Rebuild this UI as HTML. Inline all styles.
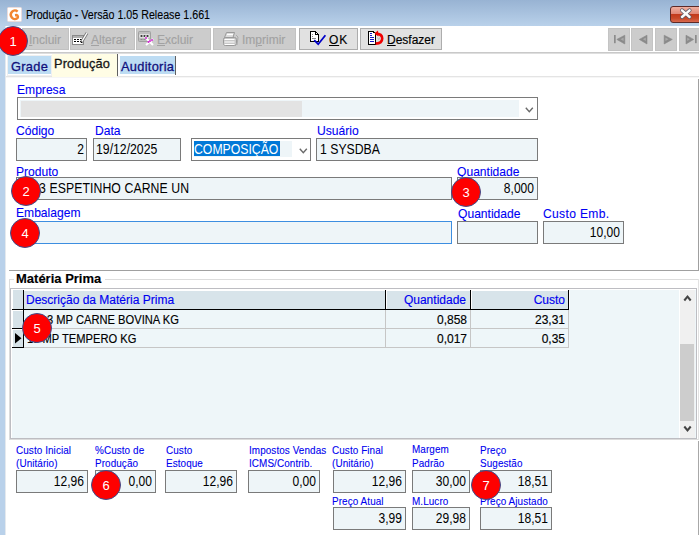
<!DOCTYPE html>
<html><head><meta charset="utf-8">
<style>
*{margin:0;padding:0;box-sizing:border-box}
html,body{width:699px;height:535px;overflow:hidden;background:#fff}
body{position:relative;font-family:"Liberation Sans",sans-serif;font-size:12px;color:#000}
.a{position:absolute}
svg.a{overflow:visible}
.t{position:absolute;white-space:nowrap;-webkit-text-stroke:0.15px currentColor}
.circ{position:absolute;border-radius:50%;background:#fe0000;border:1px solid #3d4d8c;color:#fff;font-size:13px;text-align:center;font-family:"Liberation Sans",sans-serif}
</style></head><body>

<div class="a" style="left:0px;top:0px;width:699px;height:26px;background:linear-gradient(#98b3d3,#b9d1ea);"></div>
<svg class="a" style="left:7px;top:7px" width="15" height="15" viewBox="0 0 15 15"><rect x="0.5" y="0.5" width="14" height="14" rx="1" fill="#fff" stroke="#eadcdc"/><path d="M10.6 4.6 A4 4.3 0 1 0 10.2 11.3 A1.9 1.9 0 0 0 9.6 8 L8 8.2" fill="none" stroke="#f28630" stroke-width="2.5"/></svg>
<div class="t" style="left:26px;top:8px;font-size:12px;line-height:14px;color:#000;transform:scaleX(0.89);transform-origin:0 0;-webkit-text-stroke:0.1px #000">Produção - Versão 1.05 Release 1.661</div>
<div class="a" style="left:670px;top:6px;width:44px;height:17px;border-radius:3px;border:1px solid #5c2a28;background:linear-gradient(#f0b0a0 0%,#e08878 45%,#c23a1c 50%,#c84828 75%,#d86a50 100%)"></div>
<svg class="a" style="left:679px;top:8px" width="14" height="12" viewBox="0 0 14 12"><path d="M3 2.3 L10.6 9 M10.6 2.3 L3 9" stroke="#5a5a68" stroke-width="3.9" stroke-linecap="round"/><path d="M3 2.3 L10.6 9 M10.6 2.3 L3 9" stroke="#fbfbfb" stroke-width="2.4" stroke-linecap="round"/></svg>
<div class="a" style="left:0px;top:26px;width:5px;height:509px;background:#b9d1ea;"></div>
<div class="a" style="left:5px;top:26px;width:1px;height:509px;background:#e4e9ee;"></div>
<div class="a" style="left:22px;top:28px;width:47px;height:22px;background:#cccccc;border:1px solid #c2c2c2"></div>
<div class="t" style="top:33px;font-size:12px;line-height:14px;color:#a2a2a2;font-weight:normal;left:29px;"><u>I</u>ncluir</div>
<div class="a" style="left:70px;top:28px;width:65px;height:22px;background:#cccccc;border:1px solid #c2c2c2"></div>
<div class="t" style="top:33px;font-size:12px;line-height:14px;color:#a2a2a2;font-weight:normal;left:91px;"><u>A</u>lterar</div>
<div class="a" style="left:136px;top:28px;width:75px;height:22px;background:#cccccc;border:1px solid #c2c2c2"></div>
<div class="t" style="top:33px;font-size:12px;line-height:14px;color:#a2a2a2;font-weight:normal;left:157px;"><u>E</u>xcluir</div>
<div class="a" style="left:213px;top:28px;width:83px;height:22px;background:#cccccc;border:1px solid #c2c2c2"></div>
<div class="t" style="top:33px;font-size:12px;line-height:14px;color:#a2a2a2;font-weight:normal;left:242px;">Im<u>p</u>rimir</div>
<div class="a" style="left:299px;top:28px;width:59px;height:22px;background:#e1e1e1;border:1px solid #adadad"></div>
<div class="t" style="top:33px;font-size:12px;line-height:14px;color:#000;font-weight:normal;left:329px;letter-spacing:0.8px"><u>O</u>K</div>
<div class="a" style="left:360px;top:28px;width:82px;height:22px;background:#e1e1e1;border:1px solid #adadad"></div>
<div class="t" style="top:33px;font-size:12px;line-height:14px;color:#000;font-weight:normal;left:387px;"><u>D</u>esfazer</div>
<svg class="a" style="left:72px;top:30px" width="17" height="16" viewBox="0 0 17 16"><rect x="0.5" y="5.5" width="11" height="9" fill="#fff" stroke="#8a8a8a"/><rect x="1" y="6" width="10" height="2" fill="#b0b0b0"/><path d="M2 9.5h2M5 9.5h2M8 9.5h2M2 11.5h2M5 11.5h2M8 11.5h2" stroke="#000" stroke-width="1.2"/><path d="M9.5 12 L15 3" stroke="#777" stroke-width="3"/><path d="M9.5 12 L15 3" stroke="#fff" stroke-width="1.4"/><path d="M8.6 12.8 L10.8 13.2 L9.2 11" fill="#000"/></svg>
<svg class="a" style="left:138px;top:31px" width="18" height="16" viewBox="0 0 18 16"><rect x="0.5" y="0.5" width="12" height="10" rx="1" fill="#bdbdbd" stroke="#a0a0a0"/><rect x="1.5" y="3.5" width="10" height="3" fill="#fff"/><path d="M2.5 5h2M5.5 5h2M8.5 5h2" stroke="#000" stroke-width="1.4"/><path d="M2.5 8.5h2M5.5 8.5h2M8.5 8.5h2" stroke="#8a8a8a" stroke-width="1"/><path d="M7 6 L15 14 M15 8 L8 14" stroke="#fff" stroke-width="2"/><circle cx="8" cy="7" r="1" fill="#d020d0"/><circle cx="12" cy="10" r="1" fill="#d020d0"/><circle cx="14" cy="9" r="1" fill="#d020d0"/><circle cx="10.5" cy="11" r="1" fill="#d020d0"/></svg>
<svg class="a" style="left:223px;top:32px" width="17" height="15" viewBox="0 0 17 15"><path d="M3.5 0.5 H11.5 L10 5.5 H1.5 Z" fill="#dcdcdc" stroke="#9a9a9a"/><path d="M4 2.5h6" stroke="#fff" stroke-width="1"/><rect x="0.5" y="5.5" width="13" height="8" rx="2" fill="#c8c8c8" stroke="#9a9a9a"/><path d="M1.5 7.5h10M1.5 10h10M1.5 12.5h10" stroke="#fff" stroke-width="1.2"/><path d="M13 3 L15 5 L14 13" fill="none" stroke="#aaa" stroke-width="1"/></svg>
<svg class="a" style="left:309px;top:30px" width="18" height="17" viewBox="0 0 18 17"><g shape-rendering="crispEdges"><path d="M1.5 1.5 H6.5 L9.5 4.5 V11.5 H1.5 Z" fill="#fff" stroke="#000" stroke-width="1.4"/><rect x="6" y="1" width="1" height="4" fill="#000"/><rect x="6" y="4" width="3" height="1" fill="#000"/><rect x="3" y="4" width="1" height="1" fill="#888"/><rect x="3" y="6" width="1" height="1" fill="#888"/><rect x="3" y="8" width="4" height="1" fill="#888"/></g><path d="M5.2 10.2 L9.2 14.2 L16.4 5.2" fill="none" stroke="#0000c8" stroke-width="1.8"/></svg>
<svg class="a" style="left:367px;top:30px" width="18" height="16" viewBox="0 0 18 16"><g shape-rendering="crispEdges"><path d="M1 1 H6 L8 3 V14 H1 Z" fill="#fff" stroke="#000" stroke-width="1"/><rect x="6" y="1" width="1" height="2" fill="#000"/><rect x="3" y="3" width="2" height="1" fill="#1818c8"/><rect x="3" y="5" width="2" height="1" fill="#1818c8"/><rect x="3" y="7" width="4" height="1" fill="#1818c8"/><rect x="3" y="9" width="4" height="1" fill="#1818c8"/><rect x="3" y="11" width="4" height="1" fill="#1818c8"/></g><path d="M8.5 3.6 C13.5 3.6 15.2 6 15.2 8.6 C15.2 11.6 12.8 13.6 8.6 13.6" fill="none" stroke="#f00000" stroke-width="2.6"/><path d="M7.6 3.2 L11 0.6 L11.4 6.4 Z" fill="#f00000"/><path d="M10.5 7.5 L11.8 9.6 L13 7.3" fill="none" stroke="#b8b8b8" stroke-width="1"/></svg>
<div class="a" style="left:608px;top:28px;width:22px;height:23px;background:#cccccc;border:1px solid #c4c4c4"></div>
<div class="a" style="left:631px;top:28px;width:22px;height:23px;background:#cccccc;border:1px solid #c4c4c4"></div>
<div class="a" style="left:655px;top:28px;width:22px;height:23px;background:#cccccc;border:1px solid #c4c4c4"></div>
<div class="a" style="left:679px;top:28px;width:22px;height:23px;background:#cccccc;border:1px solid #c4c4c4"></div>
<svg class="a" style="left:614px;top:35px" width="11" height="10" viewBox="0 0 11 10"><rect x="0" y="0" width="1.7" height="8.2" fill="#8c8c8c"/><path d="M2.8 4.4 L10.8 0.2 L10.8 9 Z" fill="#8a8a8a" stroke="#8a8a8a" stroke-width="0.6" stroke-linejoin="round"/><path d="M6.5 4.2 L9.6 2.6 L9.6 6 Z" fill="#a9a9a9"/></svg>
<svg class="a" style="left:639px;top:35px" width="9" height="10" viewBox="0 0 9 10"><path d="M0.3 4.4 L8 0.2 L8 9 Z" fill="#8a8a8a" stroke="#8a8a8a" stroke-width="0.6" stroke-linejoin="round"/><path d="M4 4.2 L6.8 2.6 L6.8 6 Z" fill="#a9a9a9"/></svg>
<svg class="a" style="left:664px;top:35px" width="9" height="10" viewBox="0 0 9 10"><path d="M8.3 4.4 L0.2 0.2 L0.2 9 Z" fill="#8a8a8a" stroke="#8a8a8a" stroke-width="0.6" stroke-linejoin="round"/><path d="M4.5 4.2 L1.4 2.6 L1.4 6 Z" fill="#a9a9a9"/></svg>
<svg class="a" style="left:686px;top:35px" width="12" height="10" viewBox="0 0 12 10"><path d="M7.6 4.4 L0 0.2 L0 9 Z" fill="#8a8a8a" stroke="#8a8a8a" stroke-width="0.6" stroke-linejoin="round"/><path d="M3.8 4.2 L1.2 2.6 L1.2 6 Z" fill="#a9a9a9"/><rect x="9" y="0" width="1.7" height="8.2" fill="#8c8c8c"/></svg>
<div class="a" style="left:6px;top:52px;width:693px;height:1px;background:#c9c9c9;"></div>
<div class="a" style="left:6px;top:53px;width:693px;height:1px;background:#dedede;"></div>
<div class="a" style="left:6px;top:76px;width:693px;height:1px;background:#e4e4e4;"></div>
<div class="a" style="left:6px;top:77px;width:693px;height:1px;background:#f6f6f6;"></div>
<div class="a" style="left:7px;top:55px;width:45px;height:21px;background:#fff;border:1px solid #f0f0f0"></div>
<div class="a" style="left:8px;top:56px;width:43px;height:18px;background:#bddcf3;"></div>
<div class="t" style="top:59px;font-size:12.8px;line-height:15px;color:#10107c;font-weight:normal;left:11px;-webkit-text-stroke:0.3px currentColor;letter-spacing:0.3px">Grade</div>
<div class="a" style="left:52px;top:54px;width:65px;height:23px;background:#fffde5;"></div>
<div class="a" style="left:117px;top:54px;width:1px;height:22px;background:#606060;"></div>
<div class="t" style="top:56px;font-size:12.8px;line-height:15px;color:#161616;font-weight:normal;left:54px;-webkit-text-stroke:0.3px currentColor;letter-spacing:0.15px">Produção</div>
<div class="a" style="left:119px;top:56px;width:57px;height:19px;background:#fff;"></div>
<div class="a" style="left:120px;top:56px;width:55px;height:18px;background:#bddcf3;"></div>
<div class="a" style="left:175px;top:56px;width:1px;height:19px;background:#606060;"></div>
<div class="a" style="left:120px;top:56px;width:55px;height:19px;overflow:hidden">
<div class="t" style="top:3px;font-size:12.8px;line-height:15px;color:#10107c;font-weight:normal;left:1px;-webkit-text-stroke:0.3px currentColor;letter-spacing:0.3px">Auditoria</div>
</div>
<div class="a" style="left:9px;top:270px;width:690px;height:1px;background:#a0a0a0;"></div>
<div class="a" style="left:698px;top:79px;width:1px;height:192px;background:#a0a0a0;"></div>
<div class="t" style="top:82px;font-size:13px;line-height:15px;color:#0000f4;font-weight:normal;left:17px;transform:scaleX(0.93);transform-origin:0 0;-webkit-text-stroke:0.1px currentColor">Empresa</div>
<div class="a" style="left:17px;top:97px;width:521px;height:23px;background:#fff;border:1px solid #7a7a7a"></div>
<div class="a" style="left:20px;top:100px;width:499px;height:17px;background:#eef5f8;"></div>
<div class="a" style="left:21px;top:101px;width:281px;height:16px;background:#e3e3e3;"></div>
<svg class="a" style="left:525px;top:107px" width="9" height="6" viewBox="0 0 9 6"><path d="M0.8 0.8 L4.3 4.6 L7.8 0.8" fill="none" stroke="#6a6a6a" stroke-width="1.4"/></svg>
<div class="t" style="top:123px;font-size:13px;line-height:15px;color:#0000f4;font-weight:normal;left:16px;transform:scaleX(0.93);transform-origin:0 0;-webkit-text-stroke:0.1px currentColor">Código</div>
<div class="a" style="left:16px;top:138px;width:71px;height:23px;background:#eef5f8;border:1px solid #7a7a7a"></div>
<div class="t" style="top:141px;font-size:14px;line-height:16px;color:#000;font-weight:normal;left:44px;width:40px;text-align:right;transform:scaleX(0.86);transform-origin:100% 0;-webkit-text-stroke:0px">2</div>
<div class="t" style="top:123px;font-size:13px;line-height:15px;color:#0000f4;font-weight:normal;left:95px;transform:scaleX(0.93);transform-origin:0 0;-webkit-text-stroke:0.1px currentColor">Data</div>
<div class="a" style="left:93px;top:138px;width:88px;height:23px;background:#eef5f8;border:1px solid #7a7a7a"></div>
<div class="t" style="top:141px;font-size:14px;line-height:16px;color:#000;font-weight:normal;left:96px;transform:scaleX(0.875);transform-origin:0 0;-webkit-text-stroke:0px">19/12/2025</div>
<div class="a" style="left:191px;top:138px;width:120px;height:23px;background:#fff;border:1px solid #7a7a7a"></div>
<div class="a" style="left:194px;top:141px;width:98px;height:16px;background:#eef5f8;"></div>
<div class="a" style="left:194px;top:141px;width:86px;height:15px;background:#0078d7;"></div>
<div class="t" style="top:141px;font-size:14px;line-height:16px;color:#fff;font-weight:normal;left:194px;transform:scaleX(0.875);transform-origin:0 0;-webkit-text-stroke:0px">COMPOSIÇÃO</div>
<svg class="a" style="left:299px;top:148px" width="9" height="6" viewBox="0 0 9 6"><path d="M0.8 0.8 L4.3 4.6 L7.8 0.8" fill="none" stroke="#6a6a6a" stroke-width="1.4"/></svg>
<div class="t" style="top:123px;font-size:13px;line-height:15px;color:#0000f4;font-weight:normal;left:317px;transform:scaleX(0.93);transform-origin:0 0;-webkit-text-stroke:0.1px currentColor">Usuário</div>
<div class="a" style="left:316px;top:138px;width:222px;height:23px;background:#eef5f8;border:1px solid #7a7a7a"></div>
<div class="t" style="top:141px;font-size:14px;line-height:16px;color:#000;font-weight:normal;left:320px;transform:scaleX(0.875);transform-origin:0 0;-webkit-text-stroke:0px">1 SYSDBA</div>
<div class="t" style="top:164px;font-size:13px;line-height:15px;color:#0000f4;font-weight:normal;left:16px;transform:scaleX(0.93);transform-origin:0 0;-webkit-text-stroke:0.1px currentColor">Produto</div>
<div class="a" style="left:16px;top:177px;width:436px;height:23px;background:#eef5f8;border:1px solid #7a7a7a"></div>
<div class="t" style="top:180px;font-size:14px;line-height:16px;color:#000;font-weight:normal;left:39px;letter-spacing:0.1px;transform:scaleX(0.875);transform-origin:0 0;-webkit-text-stroke:0px">3 ESPETINHO CARNE UN</div>
<div class="t" style="top:164px;font-size:13px;line-height:15px;color:#0000f4;font-weight:normal;left:457px;transform:scaleX(0.93);transform-origin:0 0;-webkit-text-stroke:0.1px currentColor">Quantidade</div>
<div class="a" style="left:457px;top:177px;width:81px;height:23px;background:#eef5f8;border:1px solid #7a7a7a"></div>
<div class="t" style="top:180px;font-size:14px;line-height:16px;color:#000;font-weight:normal;left:474px;width:60px;text-align:right;transform:scaleX(0.86);transform-origin:100% 0;-webkit-text-stroke:0px">8,000</div>
<div class="t" style="top:205px;font-size:13px;line-height:15px;color:#0000f4;font-weight:normal;left:16px;transform:scaleX(0.93);transform-origin:0 0;-webkit-text-stroke:0.1px currentColor">Embalagem</div>
<div class="a" style="left:16px;top:221px;width:436px;height:23px;background:#eef5f8;border:1px solid #3d8ee0"></div>
<div class="t" style="top:206px;font-size:13px;line-height:15px;color:#0000f4;font-weight:normal;left:458px;transform:scaleX(0.93);transform-origin:0 0;-webkit-text-stroke:0.1px currentColor">Quantidade</div>
<div class="a" style="left:457px;top:221px;width:81px;height:23px;background:#eef5f8;border:1px solid #7a7a7a"></div>
<div class="t" style="top:206px;font-size:13px;line-height:15px;color:#0000f4;font-weight:normal;left:543px;letter-spacing:0.35px;transform:scaleX(0.93);transform-origin:0 0;-webkit-text-stroke:0.1px currentColor">Custo Emb.</div>
<div class="a" style="left:543px;top:221px;width:81px;height:23px;background:#eef5f8;border:1px solid #7a7a7a"></div>
<div class="t" style="top:224px;font-size:14px;line-height:16px;color:#000;font-weight:normal;left:560px;width:60px;text-align:right;transform:scaleX(0.86);transform-origin:100% 0;-webkit-text-stroke:0px">10,00</div>
<div class="a" style="left:9px;top:279px;width:690px;height:1px;background:#dcdcdc;"></div>
<div class="a" style="left:9px;top:279px;width:1px;height:161px;background:#dcdcdc;"></div>
<div class="a" style="left:9px;top:439px;width:690px;height:1px;background:#dcdcdc;"></div>
<div class="a" style="left:14px;top:276px;width:91px;height:6px;background:#fff;"></div>
<div class="t" style="top:271px;font-size:13px;line-height:15px;color:#000;font-weight:bold;left:16px;">Matéria Prima</div>
<div class="a" style="left:10px;top:288px;width:687px;height:151px;background:#eef6f9;border:1px solid #bdbdc2"></div>
<div class="a" style="left:11px;top:289px;width:685px;height:1px;background:#fff;"></div>
<div class="a" style="left:11px;top:289px;width:1px;height:149px;background:#fff;"></div>
<div class="a" style="left:12px;top:290px;width:11px;height:57px;background:#d6e2e8;"></div>
<div class="a" style="left:12px;top:290px;width:1px;height:57px;background:#fff;"></div>
<div class="a" style="left:23px;top:290px;width:1px;height:58px;background:#000;"></div>
<div class="a" style="left:24px;top:290px;width:545px;height:19px;background:#d8e4ea;"></div>
<div class="a" style="left:24px;top:290px;width:545px;height:1px;background:#fff;"></div>
<div class="a" style="left:12px;top:309px;width:557px;height:1px;background:#000;"></div>
<div class="a" style="left:12px;top:328px;width:11px;height:1px;background:#000;"></div>
<div class="a" style="left:24px;top:328px;width:545px;height:1px;background:#c6c6c6;"></div>
<div class="a" style="left:12px;top:347px;width:11px;height:1px;background:#000;"></div>
<div class="a" style="left:24px;top:347px;width:545px;height:1px;background:#c6c6c6;"></div>
<div class="a" style="left:12px;top:310px;width:11px;height:1px;background:#fff;"></div>
<div class="a" style="left:12px;top:329px;width:11px;height:1px;background:#fff;"></div>
<div class="a" style="left:385px;top:290px;width:1px;height:19px;background:#000;"></div>
<div class="a" style="left:386px;top:291px;width:1px;height:18px;background:#fff;"></div>
<div class="a" style="left:385px;top:310px;width:1px;height:37px;background:#c6c6c6;"></div>
<div class="a" style="left:470px;top:290px;width:1px;height:19px;background:#000;"></div>
<div class="a" style="left:471px;top:291px;width:1px;height:18px;background:#fff;"></div>
<div class="a" style="left:470px;top:310px;width:1px;height:37px;background:#c6c6c6;"></div>
<div class="a" style="left:568px;top:290px;width:1px;height:19px;background:#000;"></div>
<div class="a" style="left:569px;top:291px;width:1px;height:18px;background:#fff;"></div>
<div class="a" style="left:568px;top:310px;width:1px;height:37px;background:#c6c6c6;"></div>
<div class="t" style="top:293px;font-size:12px;line-height:14px;color:#0000f0;font-weight:normal;left:26px;">Descrição da Matéria Prima</div>
<div class="t" style="top:293px;font-size:12px;line-height:14px;color:#0000f0;font-weight:normal;left:386px;width:80px;text-align:right;">Quantidade</div>
<div class="t" style="top:293px;font-size:12px;line-height:14px;color:#0000f0;font-weight:normal;left:475px;width:90px;text-align:right;">Custo</div>
<div class="t" style="top:313px;font-size:12px;line-height:14px;color:#000;font-weight:normal;left:47px;transform:scaleX(0.93);transform-origin:0 0">3 MP CARNE BOVINA KG</div>
<div class="t" style="top:313px;font-size:12px;line-height:14px;color:#000;font-weight:normal;left:387px;width:80px;text-align:right;">0,858</div>
<div class="t" style="top:313px;font-size:12px;line-height:14px;color:#000;font-weight:normal;left:475px;width:90px;text-align:right;">23,31</div>
<div class="t" style="top:332px;font-size:12px;line-height:14px;color:#000;font-weight:normal;left:27px;transform:scaleX(0.93);transform-origin:0 0">18 MP TEMPERO KG</div>
<div class="t" style="top:332px;font-size:12px;line-height:14px;color:#000;font-weight:normal;left:387px;width:80px;text-align:right;">0,017</div>
<div class="t" style="top:332px;font-size:12px;line-height:14px;color:#000;font-weight:normal;left:475px;width:90px;text-align:right;">0,35</div>
<svg class="a" style="left:15px;top:333px" width="7" height="11" viewBox="0 0 7 11"><path d="M0 0 L6.5 5.3 L0 10.6 Z" fill="#000"/></svg>
<div class="a" style="left:679px;top:290px;width:1px;height:148px;background:#fff;"></div>
<div class="a" style="left:680px;top:290px;width:15px;height:148px;background:#f0f0f0;"></div>
<div class="a" style="left:680px;top:344px;width:14px;height:77px;background:#cdcdcd;"></div>
<svg class="a" style="left:683px;top:295px" width="9" height="7" viewBox="0 0 9 7"><path d="M1.3 5.5 L4.5 1.6 L7.7 5.5" fill="none" stroke="#454545" stroke-width="2"/></svg>
<svg class="a" style="left:683px;top:425px" width="9" height="7" viewBox="0 0 9 7"><path d="M1.3 1.5 L4.5 5.4 L7.7 1.5" fill="none" stroke="#454545" stroke-width="2"/></svg>
<div class="a" style="left:698px;top:279px;width:1px;height:161px;background:#e2e2e2;"></div>
<div class="a" style="left:698px;top:441px;width:1px;height:94px;background:#a8a8a8;"></div>
<div class="t" style="top:444px;font-size:11px;line-height:12px;color:#0000f0;font-weight:normal;left:16px;-webkit-text-stroke:0.1px currentColor;letter-spacing:0.1px;transform:scaleX(0.9);transform-origin:0 0">Custo Inicial</div>
<div class="t" style="top:457px;font-size:11px;line-height:12px;color:#0000f0;font-weight:normal;left:16px;-webkit-text-stroke:0.1px currentColor;letter-spacing:0.1px;transform:scaleX(0.9);transform-origin:0 0">(Unitário)</div>
<div class="a" style="left:16px;top:470px;width:72px;height:23px;background:#eef5f8;border:1px solid #7a7a7a"></div>
<div class="t" style="top:473px;font-size:14px;line-height:16px;color:#000;font-weight:normal;left:18px;width:66px;text-align:right;transform:scaleX(0.86);transform-origin:100% 0;-webkit-text-stroke:0px">12,96</div>
<div class="t" style="top:444px;font-size:11px;line-height:12px;color:#0000f0;font-weight:normal;left:95px;-webkit-text-stroke:0.1px currentColor;letter-spacing:0.1px;transform:scaleX(0.9);transform-origin:0 0">%Custo de</div>
<div class="t" style="top:457px;font-size:11px;line-height:12px;color:#0000f0;font-weight:normal;left:95px;-webkit-text-stroke:0.1px currentColor;letter-spacing:0.1px;transform:scaleX(0.9);transform-origin:0 0">Produção</div>
<div class="a" style="left:95px;top:470px;width:61px;height:23px;background:#eef5f8;border:1px solid #7a7a7a"></div>
<div class="t" style="top:473px;font-size:14px;line-height:16px;color:#000;font-weight:normal;left:97px;width:55px;text-align:right;transform:scaleX(0.86);transform-origin:100% 0;-webkit-text-stroke:0px">0,00</div>
<div class="t" style="top:444px;font-size:11px;line-height:12px;color:#0000f0;font-weight:normal;left:166px;-webkit-text-stroke:0.1px currentColor;letter-spacing:0.1px;transform:scaleX(0.9);transform-origin:0 0">Custo</div>
<div class="t" style="top:457px;font-size:11px;line-height:12px;color:#0000f0;font-weight:normal;left:166px;-webkit-text-stroke:0.1px currentColor;letter-spacing:0.1px;transform:scaleX(0.9);transform-origin:0 0">Estoque</div>
<div class="a" style="left:165px;top:470px;width:72px;height:23px;background:#eef5f8;border:1px solid #7a7a7a"></div>
<div class="t" style="top:473px;font-size:14px;line-height:16px;color:#000;font-weight:normal;left:167px;width:66px;text-align:right;transform:scaleX(0.86);transform-origin:100% 0;-webkit-text-stroke:0px">12,96</div>
<div class="t" style="top:444px;font-size:11px;line-height:12px;color:#0000f0;font-weight:normal;left:249px;-webkit-text-stroke:0.1px currentColor;letter-spacing:0.1px;transform:scaleX(0.9);transform-origin:0 0">Impostos Vendas</div>
<div class="t" style="top:457px;font-size:11px;line-height:12px;color:#0000f0;font-weight:normal;left:249px;-webkit-text-stroke:0.1px currentColor;letter-spacing:0.1px;transform:scaleX(0.9);transform-origin:0 0">ICMS/Contrib.</div>
<div class="a" style="left:248px;top:470px;width:72px;height:23px;background:#eef5f8;border:1px solid #7a7a7a"></div>
<div class="t" style="top:473px;font-size:14px;line-height:16px;color:#000;font-weight:normal;left:250px;width:66px;text-align:right;transform:scaleX(0.86);transform-origin:100% 0;-webkit-text-stroke:0px">0,00</div>
<div class="t" style="top:444px;font-size:11px;line-height:12px;color:#0000f0;font-weight:normal;left:332px;-webkit-text-stroke:0.1px currentColor;letter-spacing:0.1px;transform:scaleX(0.9);transform-origin:0 0">Custo Final</div>
<div class="t" style="top:457px;font-size:11px;line-height:12px;color:#0000f0;font-weight:normal;left:332px;-webkit-text-stroke:0.1px currentColor;letter-spacing:0.1px;transform:scaleX(0.9);transform-origin:0 0">(Unitário)</div>
<div class="a" style="left:333px;top:470px;width:73px;height:23px;background:#eef5f8;border:1px solid #7a7a7a"></div>
<div class="t" style="top:473px;font-size:14px;line-height:16px;color:#000;font-weight:normal;left:335px;width:67px;text-align:right;transform:scaleX(0.86);transform-origin:100% 0;-webkit-text-stroke:0px">12,96</div>
<div class="t" style="top:443px;font-size:11px;line-height:12px;color:#0000f0;font-weight:normal;left:412px;-webkit-text-stroke:0.1px currentColor;letter-spacing:0.1px;transform:scaleX(0.9);transform-origin:0 0">Margem</div>
<div class="t" style="top:457px;font-size:11px;line-height:12px;color:#0000f0;font-weight:normal;left:412px;-webkit-text-stroke:0.1px currentColor;letter-spacing:0.1px;transform:scaleX(0.9);transform-origin:0 0">Padrão</div>
<div class="a" style="left:412px;top:470px;width:58px;height:23px;background:#eef5f8;border:1px solid #7a7a7a"></div>
<div class="t" style="top:473px;font-size:14px;line-height:16px;color:#000;font-weight:normal;left:414px;width:52px;text-align:right;transform:scaleX(0.86);transform-origin:100% 0;-webkit-text-stroke:0px">30,00</div>
<div class="t" style="top:444px;font-size:11px;line-height:12px;color:#0000f0;font-weight:normal;left:480px;-webkit-text-stroke:0.1px currentColor;letter-spacing:0.1px;transform:scaleX(0.9);transform-origin:0 0">Preço</div>
<div class="t" style="top:457px;font-size:11px;line-height:12px;color:#0000f0;font-weight:normal;left:480px;-webkit-text-stroke:0.1px currentColor;letter-spacing:0.1px;transform:scaleX(0.9);transform-origin:0 0">Sugestão</div>
<div class="a" style="left:480px;top:470px;width:72px;height:23px;background:#eef5f8;border:1px solid #7a7a7a"></div>
<div class="t" style="top:473px;font-size:14px;line-height:16px;color:#000;font-weight:normal;left:482px;width:66px;text-align:right;transform:scaleX(0.86);transform-origin:100% 0;-webkit-text-stroke:0px">18,51</div>
<div class="t" style="top:495px;font-size:11px;line-height:12px;color:#0000f0;font-weight:normal;left:332px;-webkit-text-stroke:0.1px currentColor;letter-spacing:0.1px;transform:scaleX(0.9);transform-origin:0 0">Preço Atual</div>
<div class="a" style="left:333px;top:507px;width:73px;height:23px;background:#eef5f8;border:1px solid #7a7a7a"></div>
<div class="t" style="top:510px;font-size:14px;line-height:16px;color:#000;font-weight:normal;left:335px;width:67px;text-align:right;transform:scaleX(0.86);transform-origin:100% 0;-webkit-text-stroke:0px">3,99</div>
<div class="t" style="top:495px;font-size:11px;line-height:12px;color:#0000f0;font-weight:normal;left:412px;-webkit-text-stroke:0.1px currentColor;letter-spacing:0.1px;transform:scaleX(0.9);transform-origin:0 0">M.Lucro</div>
<div class="a" style="left:412px;top:507px;width:58px;height:23px;background:#eef5f8;border:1px solid #7a7a7a"></div>
<div class="t" style="top:510px;font-size:14px;line-height:16px;color:#000;font-weight:normal;left:414px;width:52px;text-align:right;transform:scaleX(0.86);transform-origin:100% 0;-webkit-text-stroke:0px">29,98</div>
<div class="t" style="top:495px;font-size:11px;line-height:12px;color:#0000f0;font-weight:normal;left:480px;-webkit-text-stroke:0.1px currentColor;letter-spacing:0.1px;transform:scaleX(0.9);transform-origin:0 0">Preço Ajustado</div>
<div class="a" style="left:480px;top:507px;width:72px;height:23px;background:#eef5f8;border:1px solid #7a7a7a"></div>
<div class="t" style="top:510px;font-size:14px;line-height:16px;color:#000;font-weight:normal;left:482px;width:66px;text-align:right;transform:scaleX(0.86);transform-origin:100% 0;-webkit-text-stroke:0px">18,51</div>
<div class="circ" style="left:-1.8000000000000007px;top:26.0px;width:30px;height:30px;line-height:28px;padding-top:1px">1</div>
<div class="circ" style="left:11.0px;top:176.0px;width:30px;height:30px;line-height:28px;padding-top:1px">2</div>
<div class="circ" style="left:451.0px;top:176.9px;width:30px;height:30px;line-height:28px;padding-top:1px">3</div>
<div class="circ" style="left:10.0px;top:217.9px;width:30px;height:30px;line-height:28px;padding-top:1px">4</div>
<div class="circ" style="left:22.0px;top:312.8px;width:30px;height:30px;line-height:28px;padding-top:1px">5</div>
<div class="circ" style="left:91.0px;top:470.0px;width:30px;height:30px;line-height:28px;padding-top:1px">6</div>
<div class="circ" style="left:471.0px;top:470.0px;width:30px;height:30px;line-height:28px;padding-top:1px">7</div>
</body></html>
